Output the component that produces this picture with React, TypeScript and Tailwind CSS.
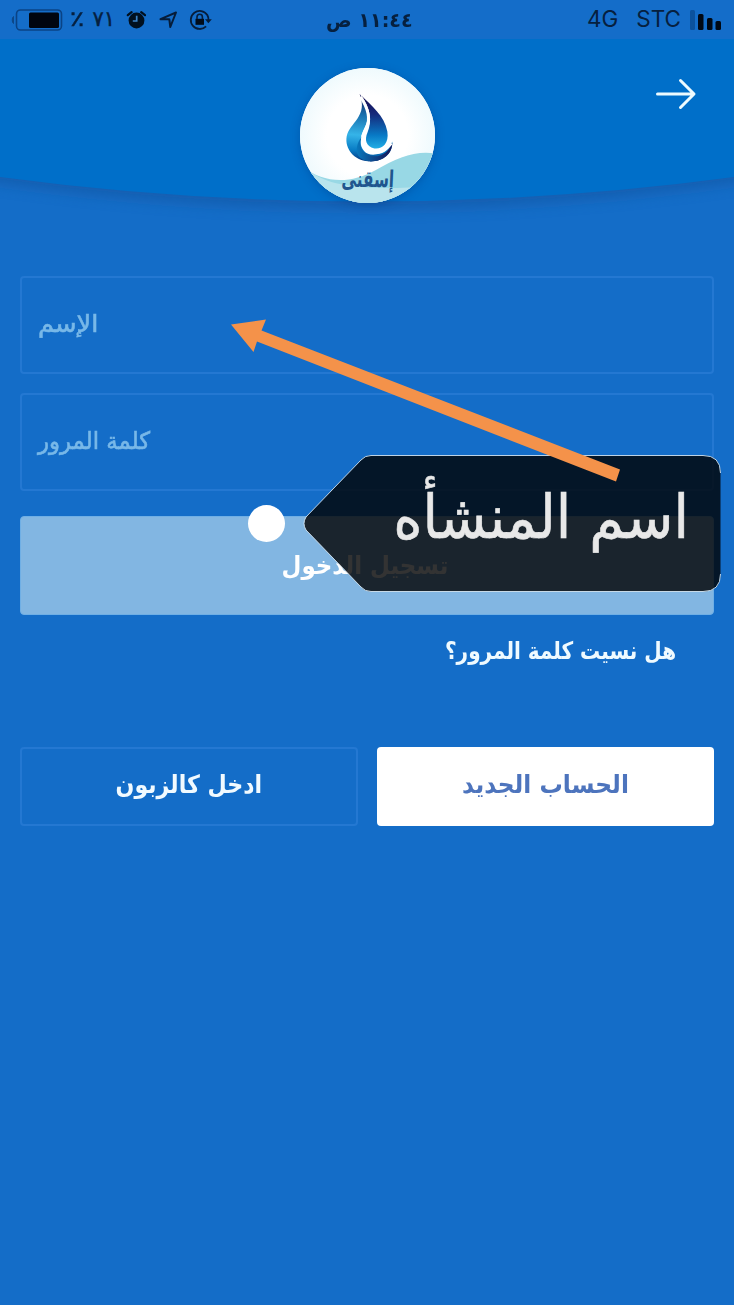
import type { ReactNode } from "react";

function StatusBar() {
  return (
    <div className="relative flex h-[39px] items-center justify-between bg-[#146dc9] pl-[11px] pr-[12px] text-[#06203f]">
      <div className="flex h-full items-center">
        <svg className="h-[24px] w-[52px]" viewBox="0 0 52 24" fill="none">
          <path d="M2.5 8.5C0.8 9.8 0.8 14.2 2.5 15.5Z" fill="#0c4788" stroke="#0c4788" />
          <rect x="5.5" y="2" width="45" height="20" rx="4" stroke="#0a4385" strokeWidth="1.6" />
          <rect x="18" y="4.500" width="30" height="15.500" rx="1.500" fill="#00050f" />
        </svg>
        <span className="ml-[7px] flex w-[45px] items-center justify-between font-['DejaVu_Sans'] text-[21px] leading-none">
          <span className="inline-block origin-left scale-x-[1.25] [-webkit-text-stroke:0.5px_#06203f]">٪</span>
          <span className="inline-block [-webkit-text-stroke:0.4px_#06203f]">٧١</span>
        </span>
        <svg className="ml-[11px] h-[20px] w-[20px]" viewBox="0 0 20 20" fill="none">
          <circle cx="10.500" cy="10.500" r="7.900" fill="#01101f" />
          <path d="M1.800 5.200 5.600 2.100M19 5.200 15.200 2.100" stroke="#01101f" strokeWidth="2.200" strokeLinecap="round" />
          <path d="M10.700 5.700V11H6.800" stroke="#3b83c7" strokeWidth="1.700" />
        </svg>
        <svg className="ml-[13px] h-[20px] w-[20px]" viewBox="0 0 20 20" fill="none">
          <path d="M1.500 9.200 17 2.500 11.300 17 10.300 9.200Z" stroke="#061d3a" strokeWidth="2" strokeLinejoin="round" />
        </svg>
        <svg className="ml-[10px] h-[22px] w-[23px]" viewBox="0 0 23 22" fill="none">
          <path d="M18.300 6A9 9 0 1 0 17.100 17.400M18.300 6Q19.600 8.300 19.500 11" stroke="#061d3a" strokeWidth="1.800" />
          <path d="M16 10.200H22.800L19.400 14.200Z" fill="#061d3a" />
          <rect x="6.500" y="9.800" width="8.500" height="6" fill="#010c1b" />
          <path d="M8 10V8A2.700 2.700 0 0 1 13.400 8V10" stroke="#061d3a" strokeWidth="1.600" />
        </svg>
      </div>
      <div className="flex h-full items-center font-['Inter'] text-[22.5px] leading-none">
        <span className="inline-block">4G</span>
        <span className="ml-[18px]">STC</span>
        <svg className="ml-[7px] h-[22px] w-[34px]" viewBox="0 0 34 22">
          <rect x="2" y="1" width="5" height="20" rx="1.500" fill="#0b529d" />
          <rect x="10" y="5" width="5.500" height="16" rx="1.500" fill="#000813" />
          <rect x="19" y="9" width="5.500" height="12" rx="1.500" fill="#000813" />
          <rect x="27.500" y="12" width="5.500" height="9" rx="1.500" fill="#000813" />
        </svg>
      </div>
      <div className="absolute inset-x-0 top-0 flex h-[39px] items-center justify-center pl-[5px]">
        <span dir="rtl" className="inline-block scale-x-[.955] whitespace-nowrap font-['DejaVu_Sans'] text-[20px] font-bold leading-none">
          ١١:٤٤ ص
        </span>
      </div>
    </div>
  );
}

function Logo() {
  return (
    <div className="relative flex h-[135px] w-[135px] items-end justify-center overflow-hidden rounded-full bg-white shadow-[0_2px_10px_rgba(0,50,120,0.35)]">
      <svg className="absolute inset-0 h-full w-full" viewBox="0 0 136 136">
        <defs>
          <radialGradient id="disc">
            <stop offset=".6" stopColor="#ffffff" />
            <stop offset="1" stopColor="#effafd" />
          </radialGradient>
          <linearGradient id="outer" x1=".5" y1="0" x2=".45" y2="1">
            <stop offset="0" stopColor="#17104f" />
            <stop offset=".3" stopColor="#176baa" />
            <stop offset=".62" stopColor="#35b4e8" />
            <stop offset=".85" stopColor="#087bc4" />
            <stop offset="1" stopColor="#073a83" />
          </linearGradient>
          <linearGradient id="inner" x1=".5" y1="0" x2=".5" y2="1">
            <stop offset="0" stopColor="#150c51" />
            <stop offset=".35" stopColor="#162a7b" />
            <stop offset=".75" stopColor="#087ac6" />
            <stop offset="1" stopColor="#22aee5" />
          </linearGradient>
          <linearGradient id="tail" x1="0" y1="0" x2="1" y2="0">
            <stop offset="0" stopColor="#0878bd" />
            <stop offset="1" stopColor="#181354" />
          </linearGradient>
        </defs>
        <rect width="136" height="136" fill="url(#disc)" />
        <path d="M0 98C25 117 50 117 76 103C98 90 116 83 136 86V136H0Z" fill="#98d8e5" />
        <path d="M5 101C28 119 58 124 136 119V136H5Z" fill="#b9e4ed" />
        <path d="M60 26C67 35 70 43 68 52C66 61 61 66 61 74C61 83 68 89 77 87C86 86 90 81 93 74C94 87 82 95 69 94C54 93 45 81 47 69C50 55 69 49 60 26Z" fill="url(#outer)" />
        <path d="M63 68C58 77 62 88 75 89C84 89 90 83 93 75C93 87 83 95 69 94C55 92 54 79 63 68Z" fill="url(#tail)" />
        <path d="M62 28C72 38 85 48 88 64C90 77 82 82 75 81C66 79 65 72 68 65C73 53 71 41 62 28Z" fill="url(#inner)" />
        <path d="M61 29C70 43 71 52 67 60C60 72 62 83 74 85C83 86 88 81 92 76" fill="none" stroke="#fff" strokeWidth="3" />
      </svg>
      <span dir="rtl" className="relative -mx-4 mb-[11px] inline-block translate-x-[1px] -skew-x-[4deg] scale-x-[.66] whitespace-nowrap font-['DejaVu_Sans'] text-[23px] font-bold leading-[26px] text-[#20558e]">
        إسقنى
      </span>
    </div>
  );
}

function Header() {
  return (
    <header className="relative flex h-[237px] justify-center pt-[29px]">
      <svg className="absolute inset-0 h-full w-full" viewBox="0 0 734 237">
        <defs>
          <filter id="soft" x="-10%" y="-10%" width="120%" height="130%">
            <feGaussianBlur stdDeviation="7" />
          </filter>
        </defs>
        <path d="M-30 0H764V136Q367 196 -30 136Z" fill="#174f97" opacity=".5" filter="url(#soft)" transform="translate(0 4)" />
        <path d="M0 0H734V138Q367 187 0 138Z" fill="#006fc9" />
      </svg>
      <Logo />
      <button aria-label="رجوع" className="absolute right-[37px] top-[37px] h-[36px] w-[44px]">
        <svg viewBox="0 0 44 36" fill="none" className="h-full w-full">
          <path d="M4.500 18H40M27.500 4.500 41 18 27.500 31.500" stroke="#edfbff" strokeWidth="3" strokeLinecap="round" strokeLinejoin="round" />
        </svg>
      </button>
    </header>
  );
}

function Field({ children }: { children: ReactNode }) {
  return (
    <div className="flex h-[98px] items-center justify-start rounded-[4px] border-2 border-[#2478d2] pb-[3px] pl-[16px] text-[#78b8e8]">
      {children}
    </div>
  );
}

function Callout() {
  return (
    <div className="absolute left-[303px] top-[455px] flex h-[137px] w-[418px] items-start justify-end pr-[32px] pt-[27px]">
      <svg className="absolute inset-0 h-full w-full" viewBox="0 0 418 137">
        <path d="M68 .5H400Q417.500 .5 417.500 18V119Q417.500 136.500 400 136.500H68Q62 136.500 58 132L3 75Q-1 68.500 3 62L58 5Q62 .5 68 .5Z" fill="#000" fillOpacity=".8" />
        <path d="M58 5Q62 .5 68 .5H400Q417.500 .5 417.500 18M417.500 119Q417.500 136.500 400 136.500H68Q62 136.500 58 132L3 75Q-1 68.500 3 62L58 5" fill="none" stroke="#dcecf8" strokeOpacity=".85" />
      </svg>
      <span dir="rtl" className="relative inline-block origin-right scale-x-[.933] whitespace-nowrap font-['DejaVu_Sans'] text-[60px] leading-[70px] text-[#e8e8e8] [-webkit-text-stroke:0.6px_#e8e8e8]">
        اسم المنشأه
      </span>
    </div>
  );
}

export default function App() {
  return (
    <main dir="ltr" className="relative h-[1305px] w-[734px] overflow-hidden bg-[#146dc8] font-['DejaVu_Sans',sans-serif]">
      <StatusBar />
      <Header />
      <section className="flex flex-col px-[20px]">
        <div className="flex flex-col gap-[19px]">
          <Field>
            <span dir="rtl" className="inline-block origin-left scale-x-[1.07] text-[24px] leading-[30px] [-webkit-text-stroke:0.6px_#78b8e8]">الإسم</span>
          </Field>
          <Field>
            <span dir="rtl" className="inline-block origin-left scale-x-[.95] text-[24px] leading-[30px] [-webkit-text-stroke:0.6px_#78b8e8]">كلمة المرور</span>
          </Field>
        </div>
        <button className="mt-[25px] flex h-[99px] items-center justify-center rounded-[4px] border border-[#6fafe5] bg-[#82b6e2] pr-[5px] text-white">
          <span dir="rtl" className="inline-block scale-x-[.917] text-[25px] font-bold leading-[30px]">تسجيل الدخول</span>
        </button>
        <div className="mt-[19px] flex h-[34px] items-center justify-end pr-[38px] text-[#effaff]">
          <span dir="rtl" className="inline-block origin-right scale-x-[.834] whitespace-nowrap text-[24px] font-bold leading-[30px]">هل نسيت كلمة المرور؟</span>
        </div>
        <div className="mt-[79px] grid grid-cols-2 gap-[19px]">
          <button className="flex h-[79px] items-center justify-center rounded-[4px] border-2 border-[#2478d2] pb-[3px] text-[#f1faff]">
            <span dir="rtl" className="inline-block scale-x-[.885] whitespace-nowrap text-[25px] font-bold leading-[30px]">ادخل كالزبون</span>
          </button>
          <button className="flex h-[79px] items-center justify-center rounded-[4px] bg-white pb-[3px] text-[#4d74bd]">
            <span dir="rtl" className="inline-block scale-x-[.933] whitespace-nowrap text-[25px] font-bold leading-[30px]">الحساب الجديد</span>
          </button>
        </div>
      </section>
      <Callout />
      <div className="absolute left-[248px] top-[505px] h-[37px] w-[37px] rounded-full bg-white" />
      <svg className="absolute left-[225px] top-[310px] h-[180px] w-[405px]" viewBox="225 310 405 180">
        <path d="M231 324.500 266 319.500 261.500 330.500 620 469.500 616 481.500 257 341.500 253.500 352Z" fill="#f4924a" />
      </svg>
    </main>
  );
}
